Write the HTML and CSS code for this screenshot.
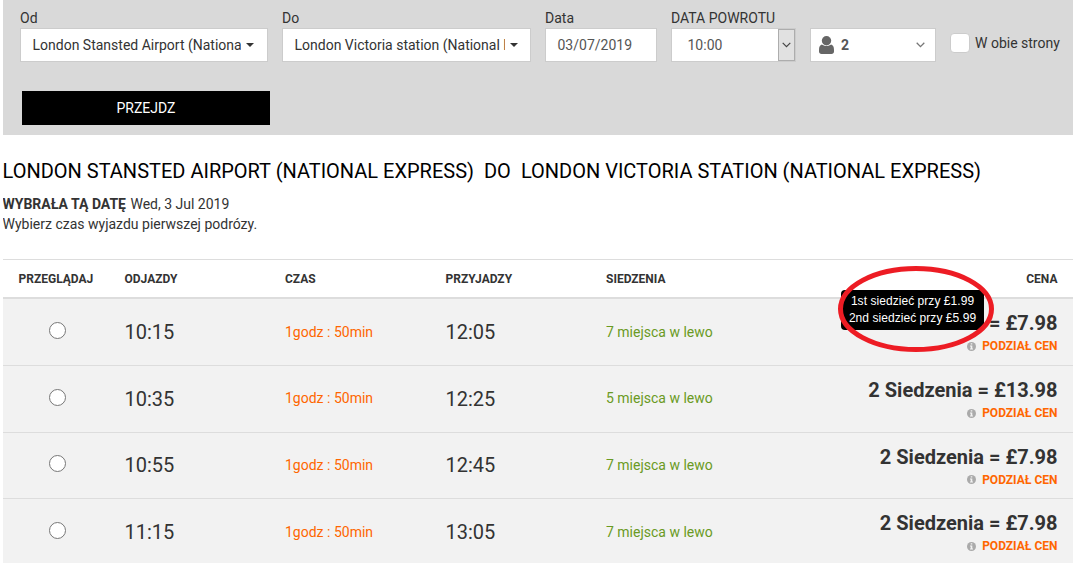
FILE: index.html
```
<!DOCTYPE html>
<html lang="pl">
<head>
<meta charset="utf-8">
<title>Rozkład</title>
<link rel="stylesheet" href="styles.css">
</head>
<body>
<form class="search">
  <div class="fields">
    <div class="field field-from"><span class="label">Od</span>
      <div class="box"><span class="station">London Stansted Airport (National Express)</span><i class="caret"></i></div></div>
    <div class="field field-to"><span class="label">Do</span>
      <div class="box"><span class="station">London Victoria station (National Express)</span><i class="caret"></i></div></div>
    <div class="field field-date"><span class="label">Data</span>
      <div class="box muted">03/07/2019</div></div>
    <div class="field field-time"><span class="label">DATA POWROTU</span>
      <div class="box muted"><span>10:00</span><span class="drop"><svg width="9" height="6" viewBox="0 0 9 6"><path d="M.7.8 4.5 4.6 8.3.8" fill="none" stroke="#444" stroke-width="1.2"/></svg></span></div></div>
    <div class="field field-people">
      <div class="box muted"><svg width="15" height="18" viewBox="0 0 15 18"><path d="M2.800 8.600C1 9.100 0 11 0 14v1.500C0 17 1 18 2.500 18h10c1.500 0 2.500-1 2.500-2.500V14c0-3-1-4.900-2.800-5.400C11 9.500 9.300 10.100 7.500 10.100S4 9.500 2.800 8.600z" fill="#666"/><circle cx="7.500" cy="4.700" r="4.700" fill="#666"/></svg><b>2</b><svg class="chev" width="9" height="6" viewBox="0 0 9 6"><path d="M.7.8 4.500 4.600 8.300.8" fill="none" stroke="#777" stroke-width="1.300"/></svg></div></div>
    <label class="both"><span class="check"></span><span>W obie strony</span></label>
  </div>
  <div class="go">PRZEJDZ</div>
</form>
<h1 class="title"><span>LONDON STANSTED AIRPORT (NATIONAL EXPRESS)</span><span>DO</span><span>LONDON VICTORIA STATION (NATIONAL EXPRESS)</span></h1>
<p class="info"><b>WYBRAŁA TĄ DATĘ</b> <span>Wed, 3 Jul 2019</span></p>
<p class="info"><span>Wybierz czas wyjazdu pierwszej podrózy.</span></p>
<div class="table">
  <div class="row head"><span>PRZEGLĄDAJ</span><span>ODJAZDY</span><span>CZAS</span><span>PRZYJADZY</span><span>SIEDZENIA</span><span class="right">CENA</span></div>
  <div class="row trip"><i class="radio"></i><span class="time">10:15</span><span class="dur">1godz : 50min</span><span class="time">12:05</span><span class="seats">7 miejsca w lewo</span>
    <div class="price"><b class="sum">= £7.98</b><div class="split"><svg class="ic" width="9" height="9" viewBox="0 0 9 9"><circle cx="4.500" cy="4.500" r="4.500" fill="#aaa"/><path d="M3.700 1.200h1.600v1.400H3.700zM3 3.500h2.300v3H6v1H3v-1h.7v-2H3z" fill="#f2f2f2"/></svg><span>PODZIAŁ CEN</span></div>
      <div class="tip"><span>1st siedzieć przy £1.99</span><span>2nd siedzieć przy £5.99</span></div>
      <svg class="ring" width="156" height="86" viewBox="0 0 156 86"><ellipse cx="78" cy="43" rx="75.500" ry="40.500" fill="none" stroke="#ed1c24" stroke-width="5"/></svg>
    </div></div>
  <div class="row trip second"><i class="radio"></i><span class="time">10:35</span><span class="dur">1godz : 50min</span><span class="time">12:25</span><span class="seats">5 miejsca w lewo</span>
    <div class="price"><b class="sum">2 Siedzenia = £13.98</b><div class="split"><svg class="ic" width="9" height="9" viewBox="0 0 9 9"><circle cx="4.500" cy="4.500" r="4.500" fill="#aaa"/><path d="M3.700 1.200h1.600v1.400H3.700zM3 3.500h2.300v3H6v1H3v-1h.7v-2H3z" fill="#f2f2f2"/></svg><span>PODZIAŁ CEN</span></div></div></div>
  <div class="row trip short"><i class="radio"></i><span class="time">10:55</span><span class="dur">1godz : 50min</span><span class="time">12:45</span><span class="seats">7 miejsca w lewo</span>
    <div class="price"><b class="sum">2 Siedzenia = £7.98</b><div class="split"><svg class="ic" width="9" height="9" viewBox="0 0 9 9"><circle cx="4.500" cy="4.500" r="4.500" fill="#aaa"/><path d="M3.700 1.200h1.600v1.400H3.700zM3 3.500h2.300v3H6v1H3v-1h.7v-2H3z" fill="#f2f2f2"/></svg><span>PODZIAŁ CEN</span></div></div></div>
  <div class="row trip"><i class="radio"></i><span class="time">11:15</span><span class="dur">1godz : 50min</span><span class="time">13:05</span><span class="seats">7 miejsca w lewo</span>
    <div class="price"><b class="sum">2 Siedzenia = £7.98</b><div class="split"><svg class="ic" width="9" height="9" viewBox="0 0 9 9"><circle cx="4.500" cy="4.500" r="4.500" fill="#aaa"/><path d="M3.700 1.200h1.600v1.400H3.700zM3 3.500h2.300v3H6v1H3v-1h.7v-2H3z" fill="#f2f2f2"/></svg><span>PODZIAŁ CEN</span></div></div></div>
</div>
</body>
</html>
```
FILE: styles.css
```
* { box-sizing: border-box; }
html { overflow: hidden; }
body { margin: 0 1px 0 3px; height: 563px; overflow: hidden; background: #fff; color: #333; font: 14px/20px Roboto, sans-serif; }
.search { height: 135px; background: #d9d9d9; padding: 8px 0 0 17px; }
.fields { display: flex; align-items: flex-end; height: 54px; }
.field { flex: none; }
.label { display: block; white-space: nowrap; }
.box { display: flex; align-items: center; height: 34px; background: #fff; border: 1px solid #ccc; white-space: nowrap; }
.muted { color: #555; }
.field-from { width: 248px; margin-right: 14px; }
.field-to { width: 249px; margin-right: 14px; }
.field-date { width: 112px; margin-right: 14px; }
.field-time { width: 125px; margin-right: 14px; }
.field-people { width: 126px; margin-right: 14px; }
.station { width: 210px; margin-left: 11.5px; overflow: hidden; }
.field-from .station { width: 208.5px; }
.caret { margin-left: 5px; border: 4px solid transparent; border-top-color: #333; border-bottom: 0; }
.field-date .box { padding-left: 11.5px; }
.field-time .box { padding-left: 15.5px; justify-content: space-between; }
.drop { display: flex; align-items: center; justify-content: center; width: 17px; height: 32px; background: #e1e1e1; border: 1px solid #adadad; }
.field-people .box { padding: 0 10px 0 8px; }
.field-people b { margin-left: 7px; }
.chev { margin-left: auto; }
.both { display: flex; align-items: center; gap: 5px; height: 20px; margin-bottom: 9px; white-space: nowrap; }
.check { width: 20px; height: 20px; background: #fff; border: 1px solid #ccc; border-radius: 4px; }
.go { width: 248px; height: 34px; margin: 29px 0 0 2px; background: #000; color: #fff; text-align: center; line-height: 34px; }
.title { display: flex; gap: 10px; margin: 24px 0 11px -0.5px; color: #000; font-size: 20px; line-height: 24px; font-weight: 400; white-space: nowrap; }
.info { margin: 0 0 0 -0.5px; }
.info b { margin-right: 1px; }
.table { margin-top: 25px; border-top: 1px solid #ddd; }
.row { display: grid; grid-template-columns: 106px 160.5px 160.5px 160.5px 149.5px 1fr; align-items: center; padding: 0 15.5px; white-space: nowrap; }
.head { height: 39px; border-bottom: 2px solid #ddd; font-size: 12px; font-weight: 700; }
.right { text-align: right; }
.trip { height: 67px; background: #f2f2f2; border-bottom: 1px solid #ddd; }
.short { height: 66px; }
.radio { width: 17px; height: 17px; margin: 0 0 3px 30.5px; border: 1px solid #777; border-radius: 50%; background: #fff; }
.time { font-size: 20px; }
.dur { color: #ff6600; }
.seats { color: #6a9a23; }
.second .dur, .second .seats, .short > span { padding-bottom: 2px; }
.short .radio { margin-bottom: 4px; }
.price { position: relative; text-align: right; padding-top: 3px; }
.sum { display: block; font-size: 20px; line-height: 24px; }
.split { display: flex; justify-content: flex-end; align-items: center; gap: 6px; padding-top: 1px; color: #ff6600; font-size: 12px; font-weight: 700; }
.tip { position: absolute; right: 73.5px; top: -18px; width: 143px; height: 40px; padding-top: 3px; background: #000; border-radius: 4px; color: #fff; font: 12px/17px "Liberation Sans", Arial, sans-serif; letter-spacing: .05px; text-align: center; }
.tip span { display: block; }
.ring { position: absolute; right: 63.5px; top: -42px; }
```
